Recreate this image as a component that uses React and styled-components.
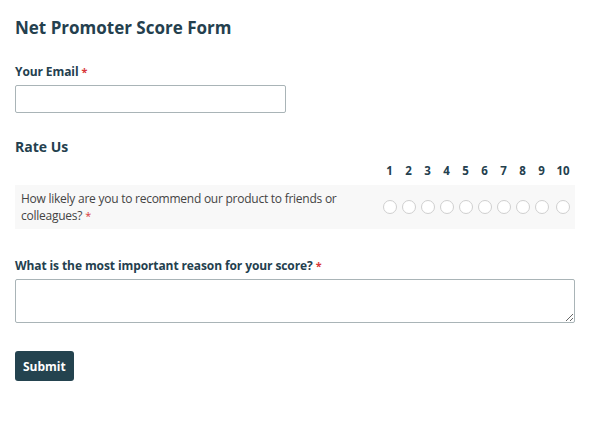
import React from 'react'
import styled, { createGlobalStyle } from 'styled-components'

const scores = [1, 2, 3, 4, 5, 6, 7, 8, 9, 10]

export default function App() {
  return (
    <>
      <GlobalStyle />
      <Form onSubmit={e => e.preventDefault()}>
        <Title>Net Promoter Score Form</Title>

        <Field>
          <Label>
            Your Email<Required>*</Required>
          </Label>
          <EmailInput type="email" />
        </Field>

        <Section>
          <SectionTitle>Rate Us</SectionTitle>
          <HeadRow>
            <span />
            {scores.map(n => (
              <Num key={n}>{n}</Num>
            ))}
          </HeadRow>
          <BodyRow>
            <Question>
              How likely are you to recommend our product to friends or colleagues?
              <Required>*</Required>
            </Question>
            {scores.map(n => (
              <RadioCell key={n}>
                <Radio type="radio" name="score" value={n} />
              </RadioCell>
            ))}
          </BodyRow>
        </Section>

        <Field $gap={29}>
          <Label>
            What is the most important reason for your score?<Required>*</Required>
          </Label>
          <Reason />
        </Field>

        <Submit type="submit">Submit</Submit>
      </Form>
    </>
  )
}

///////////////////////////////////////////////////////////////////////////////////

const GlobalStyle = createGlobalStyle`
  body {
    margin: 0;
    background: #fff;
    font-family: "Open Sans", "Noto Sans", sans-serif;
    color: #24404e;
  }
`

const Form = styled.form`
  display: flex;
  flex-direction: column;
  padding: 16px 15px;
  width: 560px;
`

const Title = styled.h1`
  margin: 0;
  font-size: 17px;
  font-weight: 700;
  line-height: 24px;
  color: #24404e;
`

const Field = styled.div`
  display: flex;
  flex-direction: column;
  margin-top: ${p => p.$gap ?? 24}px;
`

const Label = styled.label`
  font-size: 12px;
  font-weight: 700;
  line-height: 16px;
  margin-bottom: 5px;
  letter-spacing: -0.1px;
  color: #24404e;
`

const Required = styled.span`
  color: #d9383a;
  margin-left: 3px;
  font-size: 0.9em;
`

const EmailInput = styled.input`
  box-sizing: border-box;
  width: 271px;
  height: 28px;
  border: 1px solid #a9b4b7;
  border-radius: 2px;
  outline: none;
`

const Section = styled.div`
  margin-top: 24px;
`

const SectionTitle = styled.h2`
  margin: 0;
  font-size: 14px;
  font-weight: 700;
  line-height: 20px;
  color: #24404e;
`

const HeadRow = styled.div`
  display: grid;
  grid-template-columns: 1fr repeat(9, 19px) 24px;
  align-items: start;
  height: 28px;
  padding-top: 6px;
  box-sizing: border-box;
`

const Num = styled.span`
  text-align: center;
  font-size: 11.5px;
  font-weight: 700;
  line-height: 16px;
  color: #24404e;
`

const BodyRow = styled.div`
  display: grid;
  grid-template-columns: 1fr repeat(9, 19px) 24px;
  align-items: center;
  height: 44px;
  background: #f8f8f8;
`

const Question = styled.span`
  padding: 0 20px 0 6px;
  font-size: 12px;
  line-height: 17px;
  letter-spacing: -0.25px;
  color: #444;
`

const RadioCell = styled.span`
  display: flex;
  justify-content: center;
`

const Radio = styled.input`
  appearance: none;
  margin: 0;
  width: 14px;
  height: 14px;
  border: 1px solid #cfcfcf;
  border-radius: 50%;
  background: #fff;
`

const Reason = styled.textarea`
  box-sizing: border-box;
  width: 560px;
  height: 44px;
  border: 1px solid #a9b4b7;
  border-radius: 2px;
  resize: vertical;
  outline: none;
`

const Submit = styled.button`
  align-self: flex-start;
  margin-top: 28px;
  height: 30px;
  padding: 0 8px;
  border: none;
  border-radius: 3px;
  background: #24434f;
  color: #fff;
  font-family: inherit;
  font-size: 12px;
  font-weight: 700;
`
